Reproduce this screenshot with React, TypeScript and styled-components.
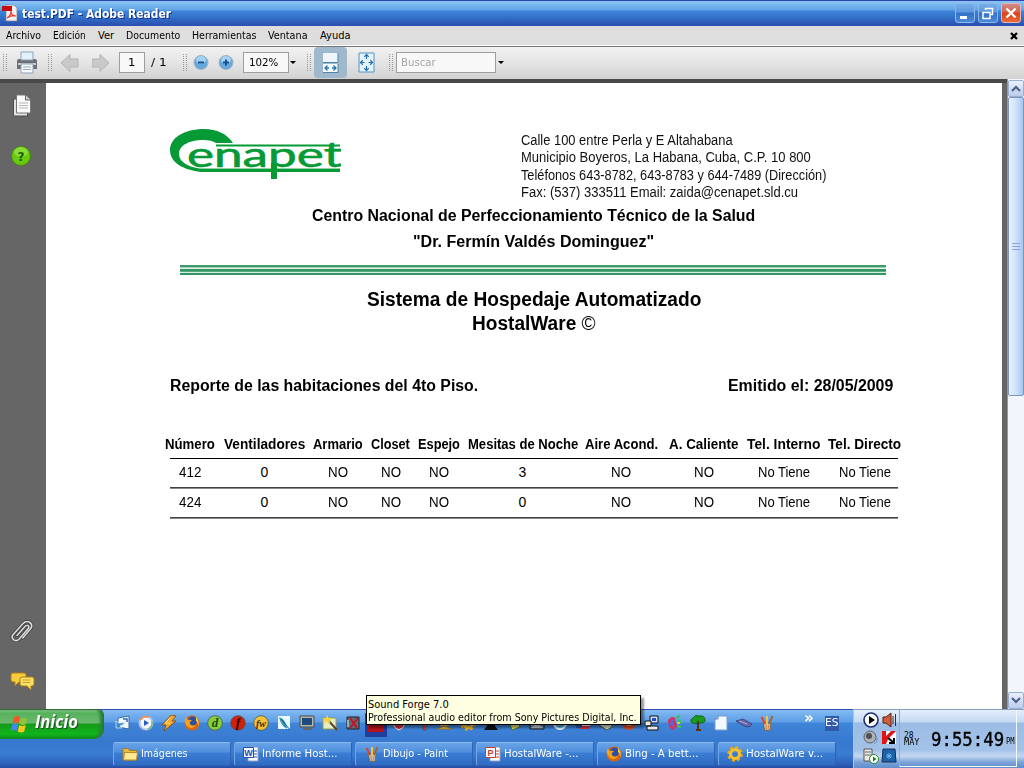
import React, { useLayoutEffect, useRef, useState } from "react";
import styled, { createGlobalStyle, css } from "styled-components";

const GlobalStyle = createGlobalStyle`
  * { box-sizing: border-box; }
  body { margin: 0; overflow: hidden; }
`;

const ui = `"DejaVu Sans Condensed", "DejaVu Sans", sans-serif`;
const doc = `"Liberation Sans", Arial, sans-serif`;

/* ---------- text set to a fixed measure ---------- */
const Measure = styled.span<{ $w: number }>`
  display: block;
  flex: none;
  width: ${(p) => p.$w}px;
  white-space: nowrap;
`;
const Stretch = styled.span`
  display: inline-block;
  transform-origin: 0 50%;
  white-space: pre;
`;
function Fit({ w, children }: { w: number; children: React.ReactNode }) {
  const ref = useRef<HTMLSpanElement>(null);
  const [k, setK] = useState(1);
  useLayoutEffect(() => {
    if (ref.current) setK(w / ref.current.offsetWidth);
  }, [w]);
  return (
    <Measure $w={w}>
      <Stretch ref={ref} style={{ transform: `scaleX(${k})` }}>
        {children}
      </Stretch>
    </Measure>
  );
}

/* ---------- window chrome ---------- */
const Screen = styled.div`
  width: 1024px;
  height: 768px;
  display: flex;
  flex-direction: column;
  position: relative;
  overflow: hidden;
  font: 11px/14px ${ui};
  color: #000;
  background: #666;
`;
const TitleBar = styled.header`
  height: 26px;
  flex: none;
  display: flex;
  align-items: center;
  padding: 0 3px 0 2px;
  background: linear-gradient(#2a43ae 0 1px, #8ec5f4 1px, #72b3ee 6px, #62a5e6 10px, #3d84d8 11px, #3576cc 16px, #2e5dba 22px, #2a4eae 26px);
`;
const TitleText = styled.div`
  flex: 1;
  margin: 1px 0 0 4px;
  font: bold 12px/16px ${ui};
  color: #fff;
  text-shadow: 1px 1px 0 #12308c;
`;
const WinButtons = styled.div`
  display: flex;
  gap: 3px;
  margin-top: -1px;
`;
const WinButton = styled.div<{ $close?: boolean }>`
  width: 20px;
  height: 20px;
  border-radius: 3px;
  border: 1px solid ${(p) => (p.$close ? "#e7b4b4" : "#8db8ea")};
  background: ${(p) =>
    p.$close
      ? "linear-gradient(#cf8a8a, #d0654d 45%, #e04012 50%, #ea6a3c)"
      : "linear-gradient(#78aee8, #5c97de 45%, #3270c8 50%, #4a8ad8)"};
  svg { display: block; }
`;
const MenuBar = styled.nav`
  height: 20px;
  flex: none;
  display: flex;
  align-items: center;
  gap: 12px;
  padding: 1px 6px 0;
  background: #dedede;
  border-bottom: 1px solid #fff;
`;
const MenuClose = styled.div`
  margin-left: auto;
  width: 8px;
  svg { display: block; }
`;
const ToolBar = styled.div`
  height: 33px;
  flex: none;
  display: flex;
  align-items: center;
  border-top: 1px solid #777;
  padding: 0 0 1px 3px;
  background: linear-gradient(#f1f1f1, #e4e4e4 50%, #d2d2d2);
`;
const Grip = styled.div<{ $ml?: number }>`
  width: 4px;
  height: 17px;
  margin-left: ${(p) => p.$ml ?? 0}px;
  background-image: linear-gradient(90deg, #999 1px, transparent 1px);
  background-size: 3px 2px;
  mask-image: repeating-linear-gradient(#000 0 1px, transparent 1px 2px);
`;
const Tool = styled.div<{ $ml: number; $w: number }>`
  margin-left: ${(p) => p.$ml}px;
  width: ${(p) => p.$w}px;
  flex: none;
  svg { display: block; }
`;
const ActiveTool = styled.div`
  margin-left: 3px;
  width: 33px;
  height: 31px;
  flex: none;
  display: grid;
  place-items: center;
  border-radius: 4px;
  background: #9fb8cc;
`;
const Field = styled.div<{ $ml: number; $w: number; $pl: number; $dim?: boolean }>`
  margin-left: ${(p) => p.$ml}px;
  width: ${(p) => p.$w}px;
  height: 21px;
  flex: none;
  padding: 3px 0 0 ${(p) => p.$pl}px;
  border: 1px solid #9b9fa4;
  background: #f8f8f8;
  ${(p) => p.$dim && css`color: #a5a5a5;`}
`;
const Caret = styled.div<{ $ml: number }>`
  margin-left: ${(p) => p.$ml}px;
  border: 3px solid transparent;
  border-top-color: #000;
  border-bottom: 0;
`;

/* ---------- reader body ---------- */
const Body = styled.div`
  height: 630px;
  flex: none;
  display: flex;
`;
const Viewer = styled.div`
  width: 1007px;
  display: flex;
  border-top: 4px solid #494949;
  padding-right: 5px;
  background: #666;
`;
const SideBar = styled.aside`
  width: 46px;
  flex: none;
  display: flex;
  flex-direction: column;
  align-items: flex-start;
  padding: 11px 0 17px 10px;
  svg { display: block; flex: none; }
`;
const Spacer = styled.div`
  flex: 1;
`;
const Page = styled.main`
  flex: 1;
  background: #fff;
  font-family: ${doc};
`;
const ScrollBar = styled.div`
  width: 17px;
  display: flex;
  flex-direction: column;
  background: #f2f5fb;
  border-left: 1px solid #8798bb;
  padding-top: 1px;
`;
const ScrollButton = styled.div`
  width: 16px;
  height: 17px;
  flex: none;
  display: grid;
  place-items: center;
  border: 1px solid #98aed4;
  border-radius: 2px;
  background: linear-gradient(#eaf0fd, #bdccec);
`;
const Thumb = styled.div`
  height: 299px;
  flex: none;
  display: grid;
  place-items: center;
  border: 1px solid #8094c0;
  border-radius: 2px;
  background: linear-gradient(90deg, #eaf3fe, #cfe2fb 50%, #a9c4ec);
`;

/* ---------- document ---------- */
const Letterhead = styled.div`
  height: 120px;
  display: flex;
  padding: 46px 0 0 124px;
`;
const LogoBox = styled.div`
  width: 351px;
`;
const Address = styled.div`
  padding-top: 3px;
  font-size: 14px;
  line-height: 17.3px;
  color: #111;
`;
const Centered = styled.div<{ $h: number; $size: number }>`
  height: ${(p) => p.$h}px;
  display: flex;
  justify-content: center;
  padding-left: 19px;
  font: bold ${(p) => p.$size}px/${(p) => p.$h}px ${doc};
`;
const Light = styled.span`
  font-weight: normal;
`;
const Band = styled.div`
  width: 706px;
  height: 10px;
  margin: 10px 0 12px 134px;
  background: linear-gradient(#3f9a6b 0 2px, #9fd0b6 2px 3px, #e5f3ea 3px 4px, #339464 4px 6px, #5aa981 6px 7px, #d8ede1 7px 8px, #339464 8px 10px);
`;
const ReportLine = styled.div`
  display: flex;
  justify-content: space-between;
  margin: 38px 109px 0 124px;
  font: bold 16px/25px ${doc};
`;
const Table = styled.section`
  margin: 35px 0 0 114px;
  width: 749px;
`;
const Row = styled.div<{ $head?: boolean }>`
  display: grid;
  grid-template-columns: 60px 89px 58px 47px 49px 119px 78px 87px 73px 89px;
  justify-items: center;
  align-items: center;
  height: ${(p) => (p.$head ? 25 : 28)}px;
  padding-bottom: ${(p) => (p.$head ? 4 : 2)}px;
  font-size: 14px;
  line-height: 18px;
  font-weight: ${(p) => (p.$head ? "bold" : "normal")};
`;
const Rule = styled.div<{ $soft?: boolean }>`
  height: ${(p) => (p.$soft ? 2 : 1)}px;
  margin: 0 11px 0 10px;
  background: ${(p) => (p.$soft ? "linear-gradient(#444 0 1px, #888 1px 2px)" : "#000")};
`;

/* ---------- taskbar ---------- */
const TaskBar = styled.footer`
  height: 59px;
  flex: none;
  display: flex;
  background: linear-gradient(#2c50ae 0 1px, #86bdf1 1px, #6fabec 7px, #5f9fe6 13px, #4085d8 14px, #3779cf 32px, #3a7cd2 45px, #2e64bd 54px, #264da4 59px);
`;
const Left = styled.div`
  width: 853px;
  display: flex;
  flex-direction: column;
`;
const TopRow = styled.div`
  height: 33px;
  display: flex;
`;
const Start = styled.div`
  width: 104px;
  height: 30px;
  display: flex;
  align-items: center;
  gap: 6px;
  padding: 0 0 2px 10px;
  border-radius: 0 6px 10px 0;
  border: solid #2f6e3a;
  border-width: 1px 1px 0 0;
  background: linear-gradient(#9bd89c, #55b25a 3px, #6cb870 13px, #159a1a 14px, #10b51c 24px, #0a9016 29px);
  box-shadow: inset -3px 0 3px #2a7f36;
  font: italic bold 17px/20px "Open Sans", sans-serif;
  color: #fff;
  text-shadow: 1px 1px 1px #1c4d1e;
`;
const StartLabel = styled.div`
  margin-top: -3px;
`;
const Quick = styled.div`
  display: flex;
  align-items: center;
  gap: 7px;
  height: 28px;
  padding-left: 11px;
  svg { display: block; flex: none; }
`;
const Launching = styled.div`
  width: 16px;
  flex: none;
  svg { margin: 4px 0 0 -3px; }
`;
const More = styled.div`
  width: 20px;
  margin: -11px 0 0 22px;
  font: bold 15px/14px ${ui};
  color: #fff;
`;
const Lang = styled.div`
  width: 14px;
  height: 15px;
  margin-left: -6px;
  background: #3159ac;
  color: #fff;
`;
const Tasks = styled.div`
  display: flex;
  gap: 3px;
  padding-left: 113px;
`;
const Task = styled.div`
  width: 118px;
  height: 24px;
  display: flex;
  align-items: center;
  gap: 3px;
  padding-left: 8px;
  border-radius: 2px;
  border: 1px solid #2d62b8;
  border-top-color: #8bb9ee;
  border-left-color: #6ea6e6;
  background: linear-gradient(#68a3e6, #4f8fdd 9px, #3b7ed3 10px, #2f6cc2);
  color: #fff;
  svg { display: block; flex: none; }
`;
const Tray = styled.div`
  flex: 1;
  display: flex;
  border-top: 1px solid #8a9cc0;
  border-left: 1px solid #a7c6ee;
  background: linear-gradient(#e4eefa, #c4d9f2 12px, #9bbce4 13px, #a3c2e8 40px, #c4d8f2 46px, #7da4d8 52px, #5f8ccb 58px);
`;
const TrayIcons = styled.div`
  width: 45px;
  display: grid;
  grid-template-columns: 17px 17px;
  grid-auto-rows: 18px;
  gap: 0 1px;
  padding: 2px 0 0 9px;
  svg { display: block; }
`;
const Clock = styled.div`
  width: 118px;
  height: 57px;
  display: flex;
  align-items: center;
  padding: 2px 0 0 4px;
  border: 1px solid #f4f8fd;
  border-left-color: #9aa9c0;
  border-top: 0;
  font-family: "DejaVu Sans Mono", monospace;
`;
const DateStack = styled.div`
  width: 27px;
  font-size: 8px;
  line-height: 7px;
`;
const Digits = styled.div`
  font: 19px/20px "DejaVu Sans Mono", monospace;
  -webkit-text-stroke: 0.4px #000;
`;
const Meridiem = styled.div`
  padding: 6px 0 0 2px;
  font-size: 8px;
  line-height: 8px;
`;
const Tooltip = styled.div`
  position: absolute;
  left: 366px;
  top: 695px;
  width: 275px;
  height: 30px;
  padding: 2px 0 0 1px;
  border: 1px solid #000;
  background: #ffffe1;
  line-height: 13px;
  box-shadow: 3px 3px 2px rgba(0, 0, 0, 0.4);
`;

/* ---------- drawings ---------- */
const Logo = () => (
  <svg width="171" height="52" viewBox="0 0 171 52">
    <path fill="#069a36" d="M63 14C57 5 47 0 34 0 14 0 0 9 0 21c0 13 14 20 31 22h139v-3H32C18 38 9 33 9 25 9 16 20 11 33 11c6 0 10 1 13 3z" />
    <path stroke="#069a36" strokeWidth="2" d="M46 16.500h124" />
    <path stroke="#8fd0a4" strokeWidth="1" d="M30 39.500h140" />
    <text x="17" y="38" textLength="155" lengthAdjust="spacingAndGlyphs" fontFamily="Lato, sans-serif" fontSize="34" fill="#069a36" stroke="#069a36" strokeWidth=".6">enapet</text>
    <path fill="#069a36" d="M101 34h6v16h-6z" />
  </svg>
);
const PdfIcon = () => (
  <svg width="16" height="18" viewBox="0 0 16 18">
    <path d="M4 1h8l3 3v13H4z" fill="#f4eeee" stroke="#7c7c88" strokeWidth=".7" />
    <path d="M0 2h10v5H0z" fill="#c40d10" />
    <path d="M5 14c3-2 4-5 4-7 0 3 2 5 5 5-3-1-6 0-9 2z" fill="none" stroke="#e43c34" strokeWidth="1.200" />
  </svg>
);
const Printer = () => (
  <svg width="23" height="24" viewBox="0 0 23 24">
    <path d="M1 10q0-2 2-2h16q2 0 2 2v8H1z" fill="#6c7074" />
    <path d="M2 12h18v2H2z" fill="#c6c9cc" />
    <path d="M5 1h12v8H5z" fill="#e2f2fa" stroke="#88a5b8" />
    <path d="M5 13h12v9H5z" fill="#f4fafd" stroke="#8aa3b4" />
    <path d="M7 16h8M7 18.500h8" stroke="#9ab" />
  </svg>
);
const Arrow = ({ flip }: { flip?: boolean }) => (
  <svg width="19" height="20" viewBox="0 0 19 20">
    <path transform={flip ? "matrix(-1 0 0 1 18 0)" : undefined} d="M1 10l9-8.500V6h8v8h-8v4.500z" fill="#c9c9c9" stroke="#b4b4b4" />
  </svg>
);
const Zoom = ({ plus }: { plus?: boolean }) => (
  <svg width="16" height="17" viewBox="0 0 16 17">
    <circle cx="8" cy="8.500" r="7" fill="#64a8dc" stroke="#a3b3c0" />
    <ellipse cx="8" cy="6" rx="5" ry="4" fill="#a4d2f2" />
    <path d={plus ? "M5 8.500h6M8 5.500v6" : "M5 8.500h6"} stroke="#15508f" strokeWidth="2" />
  </svg>
);
const FitWidth = () => (
  <svg width="17" height="20" viewBox="0 0 17 20">
    <path d="M1 0h15v9H1z" fill="#eef6fb" />
    <path d="M1 11h15v9H1z" fill="#f7fbfd" />
    <path d="M1 9.500h15M1 19.500h15M16 0v9M16 11v9" stroke="#4c86ae" />
    <path d="M3 15h4M10 15h4M5.500 12.500L3 15l2.500 2.500M11.500 12.500L14 15l-2.500 2.500" fill="none" stroke="#2c74b0" strokeWidth="1.300" />
  </svg>
);
const FitPage = () => (
  <svg width="17" height="21" viewBox="0 0 17 21">
    <path d="M1 1h15v19H1z" fill="#e6f3fa" stroke="#4f94c4" />
    <path d="M6.300 4.800l2.200-2.500 2.200 2.500M6.300 16.200l2.200 2.500 2.200-2.500M4.800 8.300L2.500 10.500l2.300 2.200M12.200 8.300l2.300 2.200-2.300 2.200M8.500 2.500v4.500M8.500 14v4.500M2.500 10.500h4M10.500 10.500h4" fill="none" stroke="#1f70b0" strokeWidth="1.200" />
  </svg>
);
const Pages = () => (
  <svg width="22" height="24" viewBox="0 0 22 24">
    <path d="M3.500 5h14v17h-14z" fill="#e4e4e4" stroke="#4d4d4d" />
    <path d="M6.500 1h9l5 5v13h-14z" fill="#fafafa" stroke="#777" />
    <path d="M15.500 1v5h5" fill="#ccc" stroke="#666" />
    <path d="M9 9h9M9 11.500h9M9 14h9" stroke="#b5b5b5" />
  </svg>
);
const Help = () => (
  <svg width="22" height="22" viewBox="0 0 22 22">
    <circle cx="11" cy="11" r="9.500" fill="#69c810" stroke="#3f8a0c" />
    <ellipse cx="11" cy="7" rx="7" ry="5" fill="#9be84a" opacity=".6" />
    <text x="11" y="15.500" textAnchor="middle" fontFamily="DejaVu Sans" fontWeight="bold" fontSize="12" fill="#165d08">?</text>
  </svg>
);
const Clip = () => (
  <svg width="24" height="26" viewBox="0 0 24 26">
    <g fill="none" strokeLinecap="round" strokeLinejoin="round">
      <path id="wire" d="M7 16.500l8-9q1.800-2 3.200-.8t-.2 3.100L9.500 19.800q-3 3.200-5.800 1t-.7-5L13 4.500q3.500-3.500 6.800-1t1 6l-8 9.500" stroke="#3c3c3c" strokeWidth="3.200" />
      <path d="M7 16.500l8-9q1.800-2 3.200-.8t-.2 3.100L9.500 19.800q-3 3.200-5.800 1t-.7-5L13 4.500q3.500-3.500 6.800-1t1 6l-8 9.500" stroke="#dcdcdc" strokeWidth="1.600" />
    </g>
  </svg>
);
const Comments = () => (
  <svg width="25" height="20" viewBox="0 0 25 20">
    <path d="M3 1h11q2 0 2 2v5q0 2-2 2H9l-4 4v-4H3q-2 0-2-2V3q0-2 2-2z" fill="#f6cd3c" stroke="#b07c10" />
    <path d="M12 5h10q2 0 2 2v5q0 2-2 2h-1v4l-4-4h-5q-2 0-2-2V7q0-2 2-2z" fill="#fbe06a" stroke="#b07c10" />
    <path d="M12.500 8h8M12.500 10.500h8" stroke="#d5a21d" />
  </svg>
);
const Flag = () => (
  <svg width="19" height="18" viewBox="0 0 19 18">
    <path d="M4 2q3-2 6 0L8.500 8.500q-3-2-6 0z" fill="#ee5a24" />
    <path d="M11 2.500q3 2 6.500 0L16 9q-3 2-6.500 0z" fill="#8cc63c" />
    <path d="M2.200 9.500q3-2 6 0L6.700 16q-3-2-6 0z" fill="#3f8cf0" />
    <path d="M9.200 10q3 2 6.500 0l-1.500 6.500q-3 2-6.500 0z" fill="#fcc81c" />
  </svg>
);
const Folder = () => (
  <svg width="16" height="16" viewBox="0 0 16 16">
    <path d="M1 2.500h5l1.500 2h7V14H1z" fill="#e9bd45" stroke="#a87b1c" />
    <path d="M2.500 6.500h13l-1 7.500H1.500z" fill="#ffe896" stroke="#b98b24" />
  </svg>
);
const OfficeDoc = ({ c, t }: { c: string; t: string }) => (
  <svg width="16" height="16" viewBox="0 0 16 16">
    <path d="M5 1h10v14H5z" fill="#fff" stroke="#8b9cc4" />
    <path d="M10 5h4M10 8h4M10 11h4" stroke={c} />
    <path d="M.5 1.500h10v10H.5z" fill="#f4f6ff" stroke={c} />
    <text x="5.500" y="10" textAnchor="middle" fontFamily="Liberation Sans" fontWeight="bold" fontSize="9" fill={c}>{t}</text>
  </svg>
);
const Brushes = () => (
  <svg width="16" height="16" viewBox="0 0 16 16">
    <path d="M4 8h8l-1 7.500H6z" fill="#c9beac" stroke="#6b5a45" strokeWidth=".7" />
    <path d="M6 9L2.500 2" stroke="#d8452a" strokeWidth="2" />
    <path d="M8 9V1" stroke="#f0c63a" strokeWidth="2" />
    <path d="M10 9l3.500-8" stroke="#9c6a3a" strokeWidth="2" />
    <path d="M7 10l.5 5M10 10l-1 5" stroke="#e8862c" />
  </svg>
);
const Firefox = () => (
  <svg width="16" height="16" viewBox="0 0 16 16">
    <circle cx="8" cy="8" r="7.500" fill="#d9640f" />
    <circle cx="8.500" cy="6" r="4.500" fill="#2c4fa4" />
    <path d="M1 3q2 0 3 2 3-1 4 1-3 0-2 3 2 3 6 1-3 5-8 2-4-3-3-9z" fill="#f6a21c" />
    <path d="M12 2q4 4 2 9 0-4-2-5z" fill="#fbcf3c" />
  </svg>
);
const Gear = () => (
  <svg width="16" height="16" viewBox="0 0 16 16">
    <circle cx="8" cy="8" r="6.600" fill="none" stroke="#f4a80c" strokeWidth="2.500" strokeDasharray="3 2.180" />
    <circle cx="8" cy="8" r="4.500" fill="none" stroke="#fcc22c" strokeWidth="3" />
  </svg>
);
const Disc = ({ c, t, ink }: { c: string; t: string; ink: string }) => (
  <svg width="16" height="16" viewBox="0 0 16 16">
    <circle cx="8" cy="8" r="7.300" fill={c} stroke="#4d5a4a" strokeWidth=".8" />
    <text x="8" y="12" textAnchor="middle" fontFamily="Liberation Serif" fontStyle="italic" fontWeight="bold" fontSize={t.length > 1 ? 10 : 13} fill={ink}>{t}</text>
  </svg>
);
const Glyph = ({ children }: { children: React.ReactNode }) => (
  <svg width="16" height="16" viewBox="0 0 16 16">{children}</svg>
);

const quickLaunch: React.ReactNode[] = [
  <Glyph><path d="M3 3l11-2v13L3 12z" fill="#f2f8fd" stroke="#376aa6" /><path d="M1 6v7h6l-2-2q4-1 5-4-3 1-6 1z" fill="#3f8ad8" stroke="#fff" strokeWidth=".6" /><path d="M8 4h4v3" fill="none" stroke="#2c6bb8" strokeWidth="1.500" /></Glyph>,
  <Glyph><circle cx="8" cy="8" r="6.500" fill="#f3f5ff" stroke="#b6bff0" strokeWidth="2" /><path d="M2 5q4-5 9-3" stroke="#ef8b3a" strokeWidth="1.500" fill="none" /><path d="M14 6q1 6-4 8" stroke="#5cbf5c" strokeWidth="1.200" fill="none" /><path d="M6 5l5 3-5 3z" fill="#2c5bc4" /></Glyph>,
  <Glyph><path d="M10 0l5 1-4 5h4L3 16l2-6H1z" fill="#f7a72c" stroke="#7b4610" strokeWidth=".8" /><path d="M9 3L4 8h5" stroke="#ffe08a" fill="none" /></Glyph>,
  <Firefox />,
  <Disc c="#86cf3b" t="d" ink="#164c10" />,
  <Disc c="#d2200d" t="f" ink="#2b0503" />,
  <Disc c="#f4c238" t="fw" ink="#3f2c04" />,
  <Glyph><path d="M2 1h12v13H2z" fill="#ecf7fb" /><path d="M3 2q7 2 8 12-6-3-8-12z" fill="#2a9bc2" /><path d="M5 4l9 11" stroke="#274f7c" /></Glyph>,
  <Glyph><path d="M1 1h14v11H1z" fill="#b5b5a8" stroke="#4b4b4b" /><path d="M3 3h10v7H3z" fill="#1d4a80" /><path d="M4 14h9" stroke="#666" strokeWidth="2" /></Glyph>,
  <Glyph><path d="M1 3h13v11H1z" fill="#e3efc0" stroke="#8f9c5c" /><path d="M5 4l10 11" stroke="#604020" strokeWidth="2" /><path d="M5 0l1.500 3L10 3 7.500 5.500l1 3-3.500-2-3 2 .8-3L.5 3.500 4 3z" fill="#ffd33a" /></Glyph>,
  <Glyph><path d="M2 2h12v12H2z" fill="#5c6d77" stroke="#222" /><path d="M5 3l7 10M13 3L5 13" stroke="#c2122c" strokeWidth="2" /><path d="M3 5v7" stroke="#a8d0c6" strokeWidth="1.500" /></Glyph>,
  <svg width="22" height="24" viewBox="0 0 22 24"><path d="M0 0h22v24H0z" fill="#1f3f9c" /><path d="M3 3h16v16H3z" fill="#b5121b" /></svg>,
  <Glyph><path d="M2 2h12v7q-2 5-6 6-4-1-6-6z" fill="#d8343c" stroke="#eee" /></Glyph>,
  <Glyph><path d="M2 4h12v5H2zM9 8h3v7H9z" fill="#8aa8d8" stroke="#446" /><path d="M10 9v6" stroke="#d43a2c" strokeWidth="2" /></Glyph>,
  <Glyph><path d="M8 3l4 8H3z" fill="#e8b73c" /><path d="M1 14q6-5 13 0z" fill="#f0cc5c" stroke="#a87718" /></Glyph>,
  <Gear />,
  <Glyph><path d="M5 3h6l1 8 3 4H1l3-4z" fill="#121212" /></Glyph>,
  <Glyph><path d="M2 4l9-2 3 10-8 3z" fill="#e5d86a" stroke="#3f7a2c" /></Glyph>,
  <Glyph><path d="M1 2h14v12H1z" fill="#7a8ca8" stroke="#222" /><path d="M2 13l5-5 7 5" fill="#c4d0da" /></Glyph>,
  <Glyph><circle cx="8" cy="8" r="6" fill="#4aa8e4" stroke="#e8f5ff" strokeWidth="2" /></Glyph>,
  <Glyph><path d="M1 3h14v10H1z" fill="#fff" /><path d="M4 11h11v3H4z" fill="#d8343c" /><path d="M1 3h6v10H1z" fill="#2c54b0" /></Glyph>,
  <Glyph><path d="M2 5l6-3 6 4v6l-5 3-7-4z" fill="#d6dcc4" stroke="#3e5a34" /></Glyph>,
  <Glyph><circle cx="8" cy="8" r="7" fill="#d84c24" /><circle cx="8" cy="8" r="3" fill="#f5b13c" /></Glyph>,
  <Glyph><path d="M6 1h8v7H6z" fill="#cfe0ff" stroke="#111" /><path d="M8 3h4v3H8z" fill="#234bc0" /><path d="M1 6h6v5H1zM3 11h11v4H3z" fill="#e8e8e8" stroke="#111" /></Glyph>,
  <Glyph><path d="M1 5q4-5 7-2l2 9-5 3q-4-3-4-10z" fill="#e02c5c" /><path d="M4 5l3 8M7 4L3 10" stroke="#4c6ce0" strokeWidth="1.500" /><path d="M9 3l4-2M11 5l4 3M10 11l4 1" stroke="#34c464" strokeWidth="2.500" /><path d="M10 8h3" stroke="#f4c52c" strokeWidth="2" /></Glyph>,
  <Glyph><path d="M2 8q-3-3 1-5 2-4 6-2 5-1 6 3 1 4-4 4l-3 1z" fill="#1a9a20" stroke="#0c5510" strokeWidth=".7" /><path d="M8 6v9M6 15h5" stroke="#5c3010" strokeWidth="2" /></Glyph>,
  <Glyph><path d="M5 1h9v14H2V4z" fill="#f1f8fe" stroke="#789dcc" /><path d="M2 4h3V1" fill="none" stroke="#4e7ab4" /></Glyph>,
  <Glyph><path d="M0 6l7-2 9 5-3 3-5-1z" fill="#6868a8" stroke="#34346c" strokeWidth=".7" /><path d="M3 6l8 3" stroke="#a8a8dc" /></Glyph>,
  <Brushes />,
];

const menus: [string, number][] = [["Archivo", 35], ["Edición", 33], ["Ver", 16], ["Documento", 54], ["Herramientas", 64], ["Ventana", 40], ["Ayuda", 31]];
const heads: [string, number][] = [["Número", 50], ["Ventiladores", 81], ["Armario", 50], ["Closet", 39], ["Espejo", 42], ["Mesitas de Noche", 110], ["Aire Acond.", 73], ["A. Caliente", 69], ["Tel. Interno", 73], ["Tel. Directo", 73]];
const rows = [
  ["412", "0", "NO", "NO", "NO", "3", "NO", "NO", "No Tiene", "No Tiene"],
  ["424", "0", "NO", "NO", "NO", "0", "NO", "NO", "No Tiene", "No Tiene"],
];
const cellWidth = (t: string) => (t === "NO" ? 20 : t.length === 1 ? 8 : t.length === 3 ? 22 : 52);
const tasks: [string, number, React.ReactNode][] = [
  ["Imágenes", 47, <Folder />],
  ["Informe Host...", 75, <OfficeDoc c="#2c4fae" t="W" />],
  ["Dibujo - Paint", 65, <Brushes />],
  ["HostalWare -...", 75, <OfficeDoc c="#c0442c" t="P" />],
  ["Bing - A bett...", 73, <Firefox />],
  ["HostalWare v...", 77, <Gear />],
];

export default function App() {
  return (
    <>
      <GlobalStyle />
      <Screen>
        <TitleBar>
          <PdfIcon />
          <TitleText><Fit w={149}>test.PDF - Adobe Reader</Fit></TitleText>
          <WinButtons>
            <WinButton><svg width="18" height="18"><path d="M4 13.500h7" stroke="#fff" strokeWidth="3" /></svg></WinButton>
            <WinButton><svg width="18" height="18"><path d="M6.500 6V4.500h7v6H12M6 4.500h8" fill="none" stroke="#fff" strokeWidth="1.500" /><path d="M4 8.500h7v6H4z" fill="none" stroke="#fff" strokeWidth="1.500" /></svg></WinButton>
            <WinButton $close><svg width="18" height="18"><path d="M4.500 4.500l9 9M13.500 4.500l-9 9" stroke="#fff" strokeWidth="2.400" /></svg></WinButton>
          </WinButtons>
        </TitleBar>
        <MenuBar>
          {menus.map(([t, w]) => <Fit key={t} w={w}>{t}</Fit>)}
          <MenuClose><svg width="8" height="8"><path d="M1 1l6 6M7 1L1 7" stroke="#000" strokeWidth="2.300" /></svg></MenuClose>
        </MenuBar>
        <ToolBar>
          <Grip />
          <Tool $ml={9} $w={23}><Printer /></Tool>
          <Grip $ml={9} />
          <Tool $ml={8} $w={19}><Arrow /></Tool>
          <Tool $ml={13} $w={19}><Arrow flip /></Tool>
          <Field $ml={8} $w={26} $pl={8}><Fit w={7}>1</Fit></Field>
          <Tool $ml={6} $w={16}><Fit w={16}>/ 1</Fit></Tool>
          <Grip $ml={16} />
          <Tool $ml={6} $w={16}><Zoom /></Tool>
          <Tool $ml={9} $w={16}><Zoom plus /></Tool>
          <Field $ml={9} $w={46} $pl={5}><Fit w={29}>102%</Fit></Field>
          <Caret $ml={1} />
          <Grip $ml={11} />
          <ActiveTool><FitWidth /></ActiveTool>
          <Tool $ml={11} $w={17}><FitPage /></Tool>
          <Grip $ml={14} />
          <Field $ml={3} $w={100} $pl={4} $dim><Fit w={35}>Buscar</Fit></Field>
          <Caret $ml={2} />
        </ToolBar>
        <Body>
          <Viewer>
            <SideBar>
              <Pages />
              <svg width="1" height="27" />
              <Help />
              <Spacer />
              <Clip />
              <svg width="1" height="27" />
              <Comments />
            </SideBar>
            <Page>
              <Letterhead>
                <LogoBox><Logo /></LogoBox>
                <Address>
                  <Fit w={212}>Calle 100 entre Perla y E Altahabana</Fit>
                  <Fit w={290}>Municipio Boyeros, La Habana, Cuba, C.P. 10 800</Fit>
                  <Fit w={305}>Teléfonos 643-8782, 643-8783 y 644-7489 (Dirección)</Fit>
                  <Fit w={277}>Fax: (537) 333511 Email: zaida@cenapet.sld.cu</Fit>
                </Address>
              </Letterhead>
              <Centered $h={26} $size={16}><Fit w={443}>Centro Nacional de Perfeccionamiento Técnico de la Salud</Fit></Centered>
              <Centered $h={26} $size={16}><Fit w={241}>"Dr. Fermín Valdés Dominguez"</Fit></Centered>
              <Band />
              <Centered $h={24} $size={20}><Fit w={334}>Sistema de Hospedaje Automatizado</Fit></Centered>
              <Centered $h={24} $size={20}><Fit w={124}>HostalWare <Light>©</Light></Fit></Centered>
              <ReportLine>
                <Fit w={308}>Reporte de las habitaciones del 4to Piso.</Fit>
                <Fit w={165}>Emitido el: 28/05/2009</Fit>
              </ReportLine>
              <Table>
                <Row $head>{heads.map(([t, w]) => <Fit key={t} w={w}>{t}</Fit>)}</Row>
                <Rule />
                {rows.map((r) => (
                  <React.Fragment key={r[0]}>
                    <Row>{r.map((t, i) => <Fit key={i} w={cellWidth(t)}>{t}</Fit>)}</Row>
                    <Rule $soft />
                  </React.Fragment>
                ))}
              </Table>
            </Page>
          </Viewer>
          <ScrollBar>
            <ScrollButton><svg width="10" height="7"><path d="M1 6l4-4 4 4" fill="none" stroke="#4d6185" strokeWidth="2.200" /></svg></ScrollButton>
            <Thumb><svg width="8" height="9"><path d="M0 1.500h8M0 4.500h8M0 7.500h8" stroke="#8aa6d8" /></svg></Thumb>
            <Spacer />
            <ScrollButton><svg width="10" height="7"><path d="M1 1l4 4 4-4" fill="none" stroke="#4d6185" strokeWidth="2.200" /></svg></ScrollButton>
          </ScrollBar>
        </Body>
        <TaskBar>
          <Left>
            <TopRow>
              <Start><Flag /><StartLabel><Fit w={43}>Inicio</Fit></StartLabel></Start>
              <Quick>
                {quickLaunch.map((icon, i) => <React.Fragment key={i}>{i === 11 ? <Launching>{icon}</Launching> : icon}</React.Fragment>)}
                <More><Fit w={10}>»</Fit></More>
                <Lang><Fit w={14}>ES</Fit></Lang>
              </Quick>
            </TopRow>
            <Tasks>
              {tasks.map(([t, w, icon]) => <Task key={t}>{icon}<Fit w={w}>{t}</Fit></Task>)}
            </Tasks>
          </Left>
          <Tray>
            <TrayIcons>
              <Glyph><circle cx="8" cy="8" r="7" fill="#fff" stroke="#1c2c74" strokeWidth="1.600" /><path d="M6 4l6 4-6 4z" fill="#000" /></Glyph>
              <Glyph><path d="M2 5h3l5-4v14l-5-4H2z" fill="#cf5f3c" stroke="#5a1c10" /><path d="M12 4v8M14.500 2v12" stroke="#5a1c10" /></Glyph>
              <Glyph><circle cx="7" cy="7" r="6" fill="#aeb2b6" stroke="#5d6165" /><circle cx="6" cy="6" r="3" fill="#4c4f54" /><path d="M11 14q4-2 3-6" stroke="#7a86d4" fill="none" /></Glyph>
              <Glyph><path d="M1 1h14v13H1z" fill="#fff" /><path d="M1 1h4v5l5-5h5L7 9l-2 5H1z" fill="#e01414" /><path d="M7 8l5 4M13 8v5H8" stroke="#000" strokeWidth="2" fill="none" /></Glyph>
              <Glyph><path d="M1 1h8v12H1z" fill="#e9ebe4" stroke="#555" /><path d="M2 4h6M2 7h6" stroke="#666" /><circle cx="11" cy="11" r="4.500" fill="#fff" stroke="#228a28" /><path d="M10 8.500l3.500 2.500-3.500 2.500z" fill="#18801c" /></Glyph>
              <Glyph><path d="M2 1h12l1 13H1z" fill="#1e62a8" stroke="#0d2e5c" /><path d="M5 8h6M8 5v6M6 6l4 4M10 6l-4 4" stroke="#69b4ec" /></Glyph>
            </TrayIcons>
            <Clock>
              <DateStack><Fit w={10}>28</Fit><Fit w={15}>MAY</Fit></DateStack>
              <Digits><Fit w={73}>9:55:49</Fit></Digits>
              <Meridiem><Fit w={9}>PM</Fit></Meridiem>
            </Clock>
          </Tray>
        </TaskBar>
        <Tooltip>
          <Fit w={81}>Sound Forge 7.0</Fit>
          <Fit w={269}>Professional audio editor from Sony Pictures Digital, Inc.</Fit>
        </Tooltip>
      </Screen>
    </>
  );
}
